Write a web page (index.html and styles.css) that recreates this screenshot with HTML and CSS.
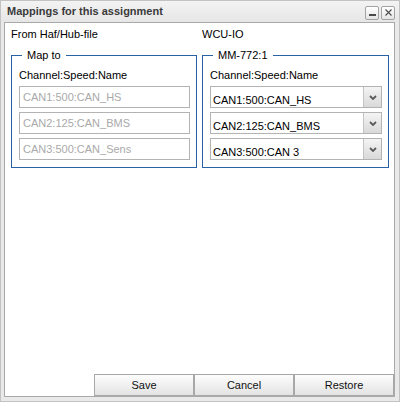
FILE: index.html
```html
<!DOCTYPE html>
<html>
<head>
<meta charset="utf-8">
<title>Mappings for this assignment</title>
<link rel="stylesheet" href="styles.css">
</head>
<body>
<div class="window">
  <div class="titlebar">
    <span class="title">Mappings for this assignment</span>
    <div class="tools">
      <span class="tool"><svg width="11" height="11" viewBox="0 0 11 11"><rect x="2" y="7" width="7" height="2" fill="#4a4a4a"/></svg></span>
      <span class="tool"><svg width="11" height="11" viewBox="0 0 11 11"><path d="M2.5 2.5 L8.5 8.5 M8.5 2.5 L2.5 8.5" stroke="#4a4a4a" stroke-width="1.1" fill="none"/></svg></span>
    </div>
  </div>
  <div class="body">
    <div class="content">
      <div class="cols">
        <div class="colhead">From Haf/Hub-file</div>
        <div class="colhead">WCU-IO</div>
      </div>
      <div class="cols groups">
        <fieldset class="group">
          <legend>Map to</legend>
          <div class="sub">Channel:Speed:Name</div>
          <div class="list">
            <div class="field">CAN1:500:CAN_HS</div>
            <div class="field">CAN2:125:CAN_BMS</div>
            <div class="field">CAN3:500:CAN_Sens</div>
          </div>
        </fieldset>
        <fieldset class="group">
          <legend>MM-772:1</legend>
          <div class="sub">Channel:Speed:Name</div>
          <div class="list">
            <div class="combo"><span class="combo-text">CAN1:500:CAN_HS</span><span class="trigger"><svg width="8" height="5" viewBox="0 0 8 5"><path d="M1 1 L4 4 L7 1" stroke="#5a5a5a" stroke-width="1.8" fill="none"/></svg></span></div>
            <div class="combo"><span class="combo-text">CAN2:125:CAN_BMS</span><span class="trigger"><svg width="8" height="5" viewBox="0 0 8 5"><path d="M1 1 L4 4 L7 1" stroke="#5a5a5a" stroke-width="1.8" fill="none"/></svg></span></div>
            <div class="combo"><span class="combo-text">CAN3:500:CAN 3</span><span class="trigger"><svg width="8" height="5" viewBox="0 0 8 5"><path d="M1 1 L4 4 L7 1" stroke="#5a5a5a" stroke-width="1.8" fill="none"/></svg></span></div>
          </div>
        </fieldset>
      </div>
    </div>
    <div class="buttons">
      <button class="btn">Save</button>
      <button class="btn">Cancel</button>
      <button class="btn">Restore</button>
    </div>
  </div>
</div>
</body>
</html>
```
FILE: styles.css
```css
html, body {
  margin: 0;
  padding: 0;
  background: #ffffff;
}
body {
  font-family: "Liberation Sans", Arial, sans-serif;
  font-size: 11px;
  line-height: 13px;
  color: #000;
}
.window {
  width: 400px;
  height: 402px;
  box-sizing: border-box;
  border: 1px solid #c2c2c2;
  background: #e9e9e9;
  display: flex;
  flex-direction: column;
}
.titlebar {
  height: 21px;
  flex: none;
  display: flex;
  align-items: center;
  justify-content: space-between;
  padding: 0 4px 0 6px;
  background: linear-gradient(#f3f3f3, #e6e6e6);
}
.title {
  font-weight: bold;
  color: #3a3a3a;
}
.tools {
  display: flex;
  gap: 2px;
  margin-top: 2px;
}
.tool {
  width: 12px;
  height: 12px;
  border: 1px solid #a3a3a3;
  border-radius: 2px;
  background: linear-gradient(#ffffff, #e4e4e4);
  display: flex;
  align-items: center;
  justify-content: center;
}
.body {
  flex: 1;
  margin: 0 4px 4px 3px;
  border: 1px solid #a9a9a9;
  background: #fff;
  display: flex;
  flex-direction: column;
}
.content {
  flex: 1;
  padding: 5px 5px 0 6px;
}
.cols {
  display: grid;
  grid-template-columns: 186px 187px;
  column-gap: 5px;
}
.groups {
  margin-top: 8px;
}
.group {
  margin: 0;
  border: 1px solid #2a62a6;
  padding: 7px 6px 7px 7px;
  min-width: 0;
}
.group legend {
  padding: 0 5px;
  margin-left: 3px;
}
.sub {
  margin-bottom: 4px;
}
.list {
  display: flex;
  flex-direction: column;
  gap: 4px;
}
.field {
  height: 22px;
  box-sizing: border-box;
  border: 1px solid #b3b3b3;
  padding: 4px 3px 0;
  color: #a9a9a9;
  white-space: nowrap;
  overflow: hidden;
}
.combo {
  height: 22px;
  box-sizing: border-box;
  border: 1px solid #b3b3b3;
  display: flex;
}
.combo-text {
  flex: 1;
  padding: 7px 2px 0;
  white-space: nowrap;
  overflow: hidden;
}
.trigger {
  width: 17px;
  flex: none;
  border-left: 1px solid #c4c4c4;
  background: linear-gradient(#f4f4f4, #d9d9d9);
  display: flex;
  align-items: center;
  justify-content: center;
}
.buttons {
  display: flex;
  justify-content: flex-end;
}
.btn {
  width: 100px;
  height: 22px;
  box-sizing: border-box;
  border: 1px solid #a8a8a8;
  background: linear-gradient(#fdfdfd, #e3e3e3);
  font-family: "Liberation Sans", Arial, sans-serif;
  font-size: 11px;
  color: #111;
  padding: 0;
  margin: 0;
}
```
